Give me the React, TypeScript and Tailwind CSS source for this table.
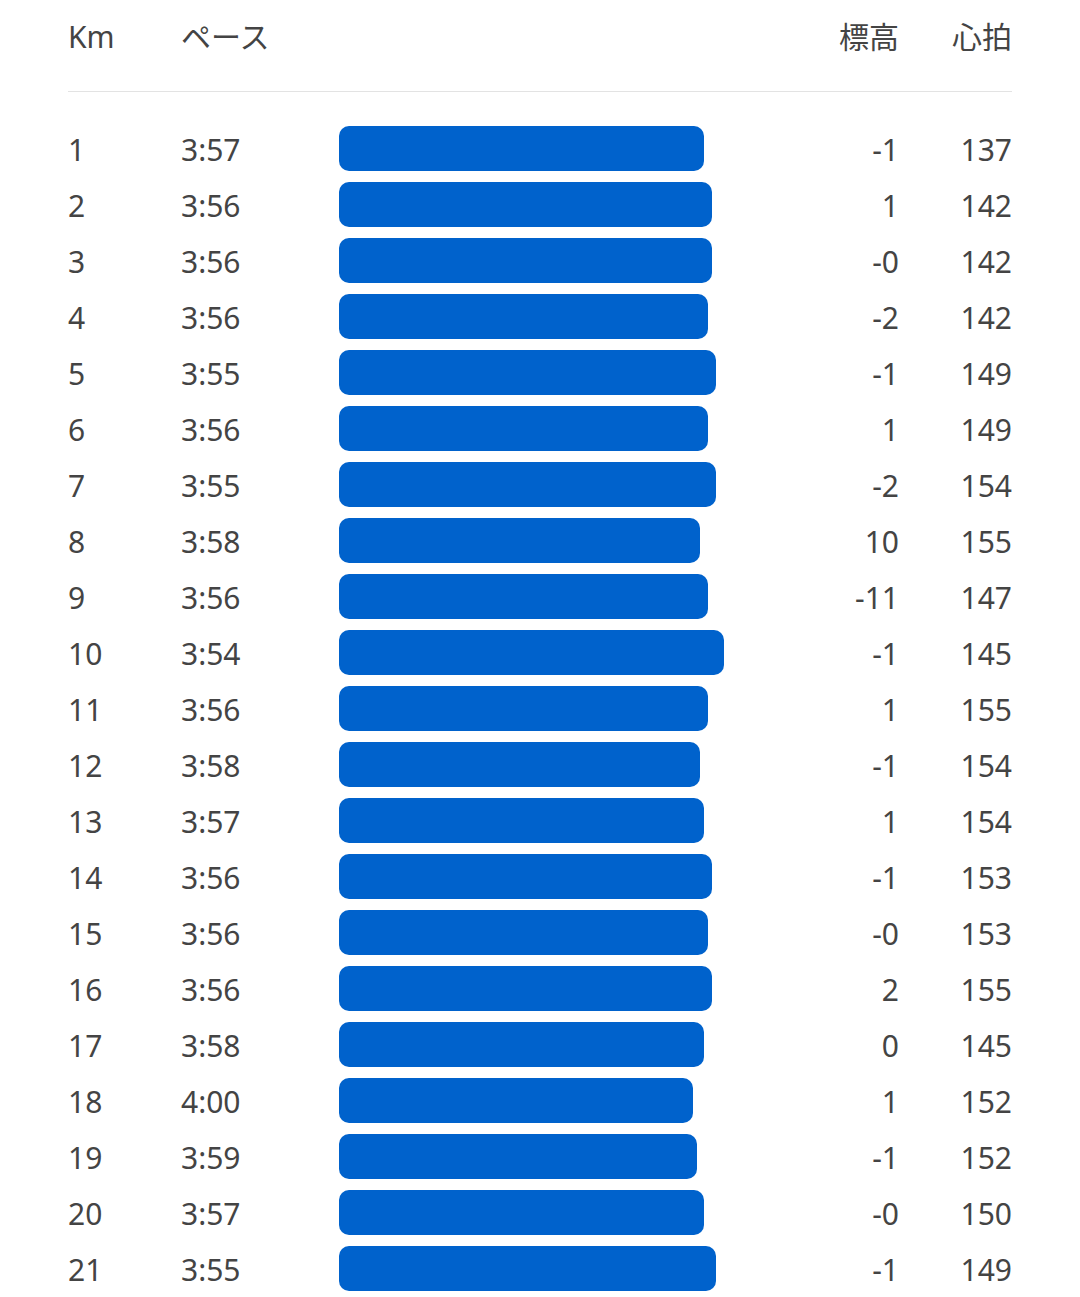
import React from "react";

const rows: [number, string, number, string, number][] = [
  [1, "3:57", 704, "-1", 137],
  [2, "3:56", 712, "1", 142],
  [3, "3:56", 712, "-0", 142],
  [4, "3:56", 708, "-2", 142],
  [5, "3:55", 716, "-1", 149],
  [6, "3:56", 708, "1", 149],
  [7, "3:55", 716, "-2", 154],
  [8, "3:58", 700, "10", 155],
  [9, "3:56", 708, "-11", 147],
  [10, "3:54", 724, "-1", 145],
  [11, "3:56", 708, "1", 155],
  [12, "3:58", 700, "-1", 154],
  [13, "3:57", 704, "1", 154],
  [14, "3:56", 712, "-1", 153],
  [15, "3:56", 708, "-0", 153],
  [16, "3:56", 712, "2", 155],
  [17, "3:58", 704, "0", 145],
  [18, "4:00", 693, "1", 152],
  [19, "3:59", 697, "-1", 152],
  [20, "3:57", 704, "-0", 150],
  [21, "3:55", 716, "-1", 149],
];

export default function App() {
  return (
    <div
      className="w-[1080px] h-[1297px] overflow-hidden bg-white text-[#444444]"
      style={{ fontFamily: '"Noto Sans", "Noto Sans CJK JP", sans-serif' }}
    >
      <div className="px-[68px]">
        <div className="h-[76px] pb-[4px] flex items-center text-[30px]">
          <div className="w-[113px]">Km</div>
          <div className="flex-1">ペース</div>
          <div className="w-[100px] text-right">標高</div>
          <div className="w-[113px] text-right">心拍</div>
        </div>
        <div className="mt-[15px] h-px bg-[#e3e3e3]" />
        <div className="pt-[30px]">
          {rows.map(([km, pace, right, elev, hr]) => (
            <div key={km} className="h-[56px] flex items-center text-[30px]">
              <div className="w-[113px] -mt-[2px]">{km}</div>
              <div className="w-[158px] -mt-[2px]">{pace}</div>
              <div className="flex-1 h-full flex items-start">
                <div
                  className="mt-[4px] h-[44.5px] rounded-[10px] bg-[#0062cc]"
                  style={{ width: `${right - 339}px` }}
                />
              </div>
              <div className="w-[100px] text-right -mt-[2px]">{elev}</div>
              <div className="w-[113px] text-right -mt-[2px]">{hr}</div>
            </div>
          ))}
        </div>
      </div>
    </div>
  );
}
